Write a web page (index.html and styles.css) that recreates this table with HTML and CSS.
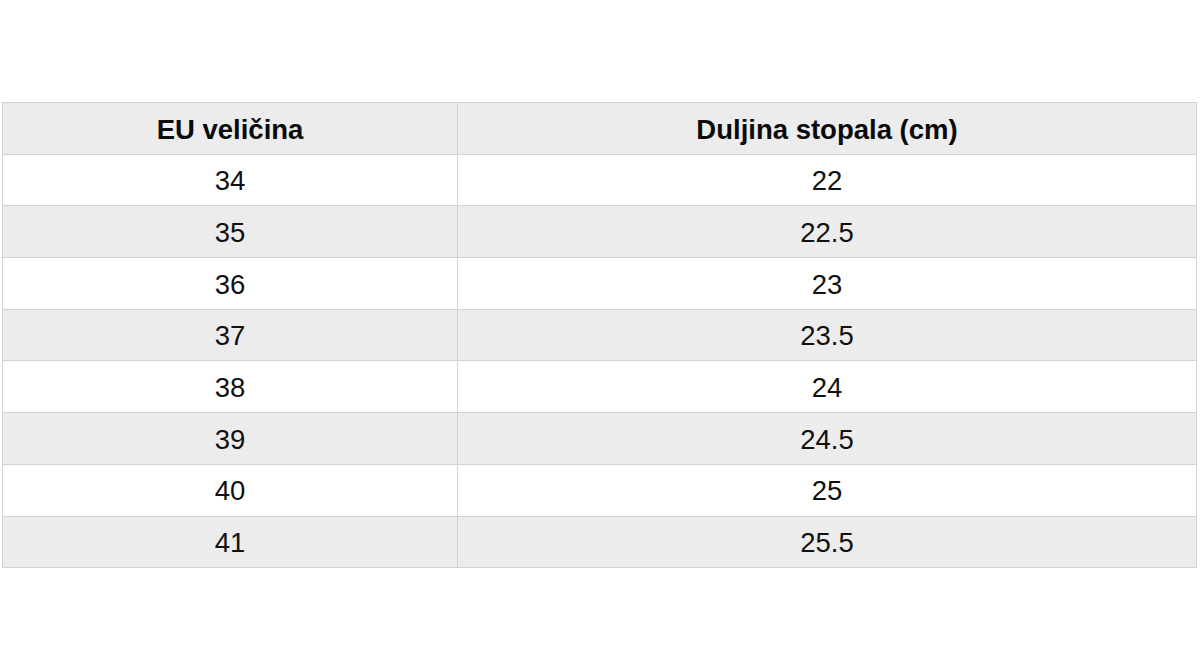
FILE: index.html
```html
<!DOCTYPE html>
<html>
<head>
<meta charset="utf-8">
<link rel="stylesheet" href="styles.css">
</head>
<body>
<table class="size-table">
  <thead>
    <tr><th class="col-eu">EU veličina</th><th>Duljina stopala (cm)</th></tr>
  </thead>
  <tbody>
    <tr><td>34</td><td>22</td></tr>
    <tr class="alt"><td>35</td><td>22.5</td></tr>
    <tr><td>36</td><td>23</td></tr>
    <tr class="alt"><td>37</td><td>23.5</td></tr>
    <tr><td>38</td><td>24</td></tr>
    <tr class="alt"><td>39</td><td>24.5</td></tr>
    <tr><td>40</td><td>25</td></tr>
    <tr class="alt"><td>41</td><td>25.5</td></tr>
  </tbody>
</table>
</body>
</html>
```

FILE: styles.css
```css
html, body {
  margin: 0;
  padding: 0;
  background: #ffffff;
}
body {
  padding: 102px 3px 0 2px;
  font-family: "Liberation Sans", Arial, Helvetica, sans-serif;
  color: #111111;
}
.size-table {
  width: 1195px;
  border-collapse: collapse;
  table-layout: fixed;
}
.size-table th,
.size-table td {
  border: 1px solid #d2d2d2;
  text-align: center;
  vertical-align: middle;
  font-size: 27.5px;
  line-height: 1;
  height: 51.7px;
  padding: 2px 0 0 0;
  box-sizing: border-box;
}
.size-table th {
  font-weight: bold;
  background: #ececec;
  color: #0a0a0a;
}
.size-table .col-eu {
  width: 455px;
}
.size-table tr.alt td {
  background: #ececec;
}
```
